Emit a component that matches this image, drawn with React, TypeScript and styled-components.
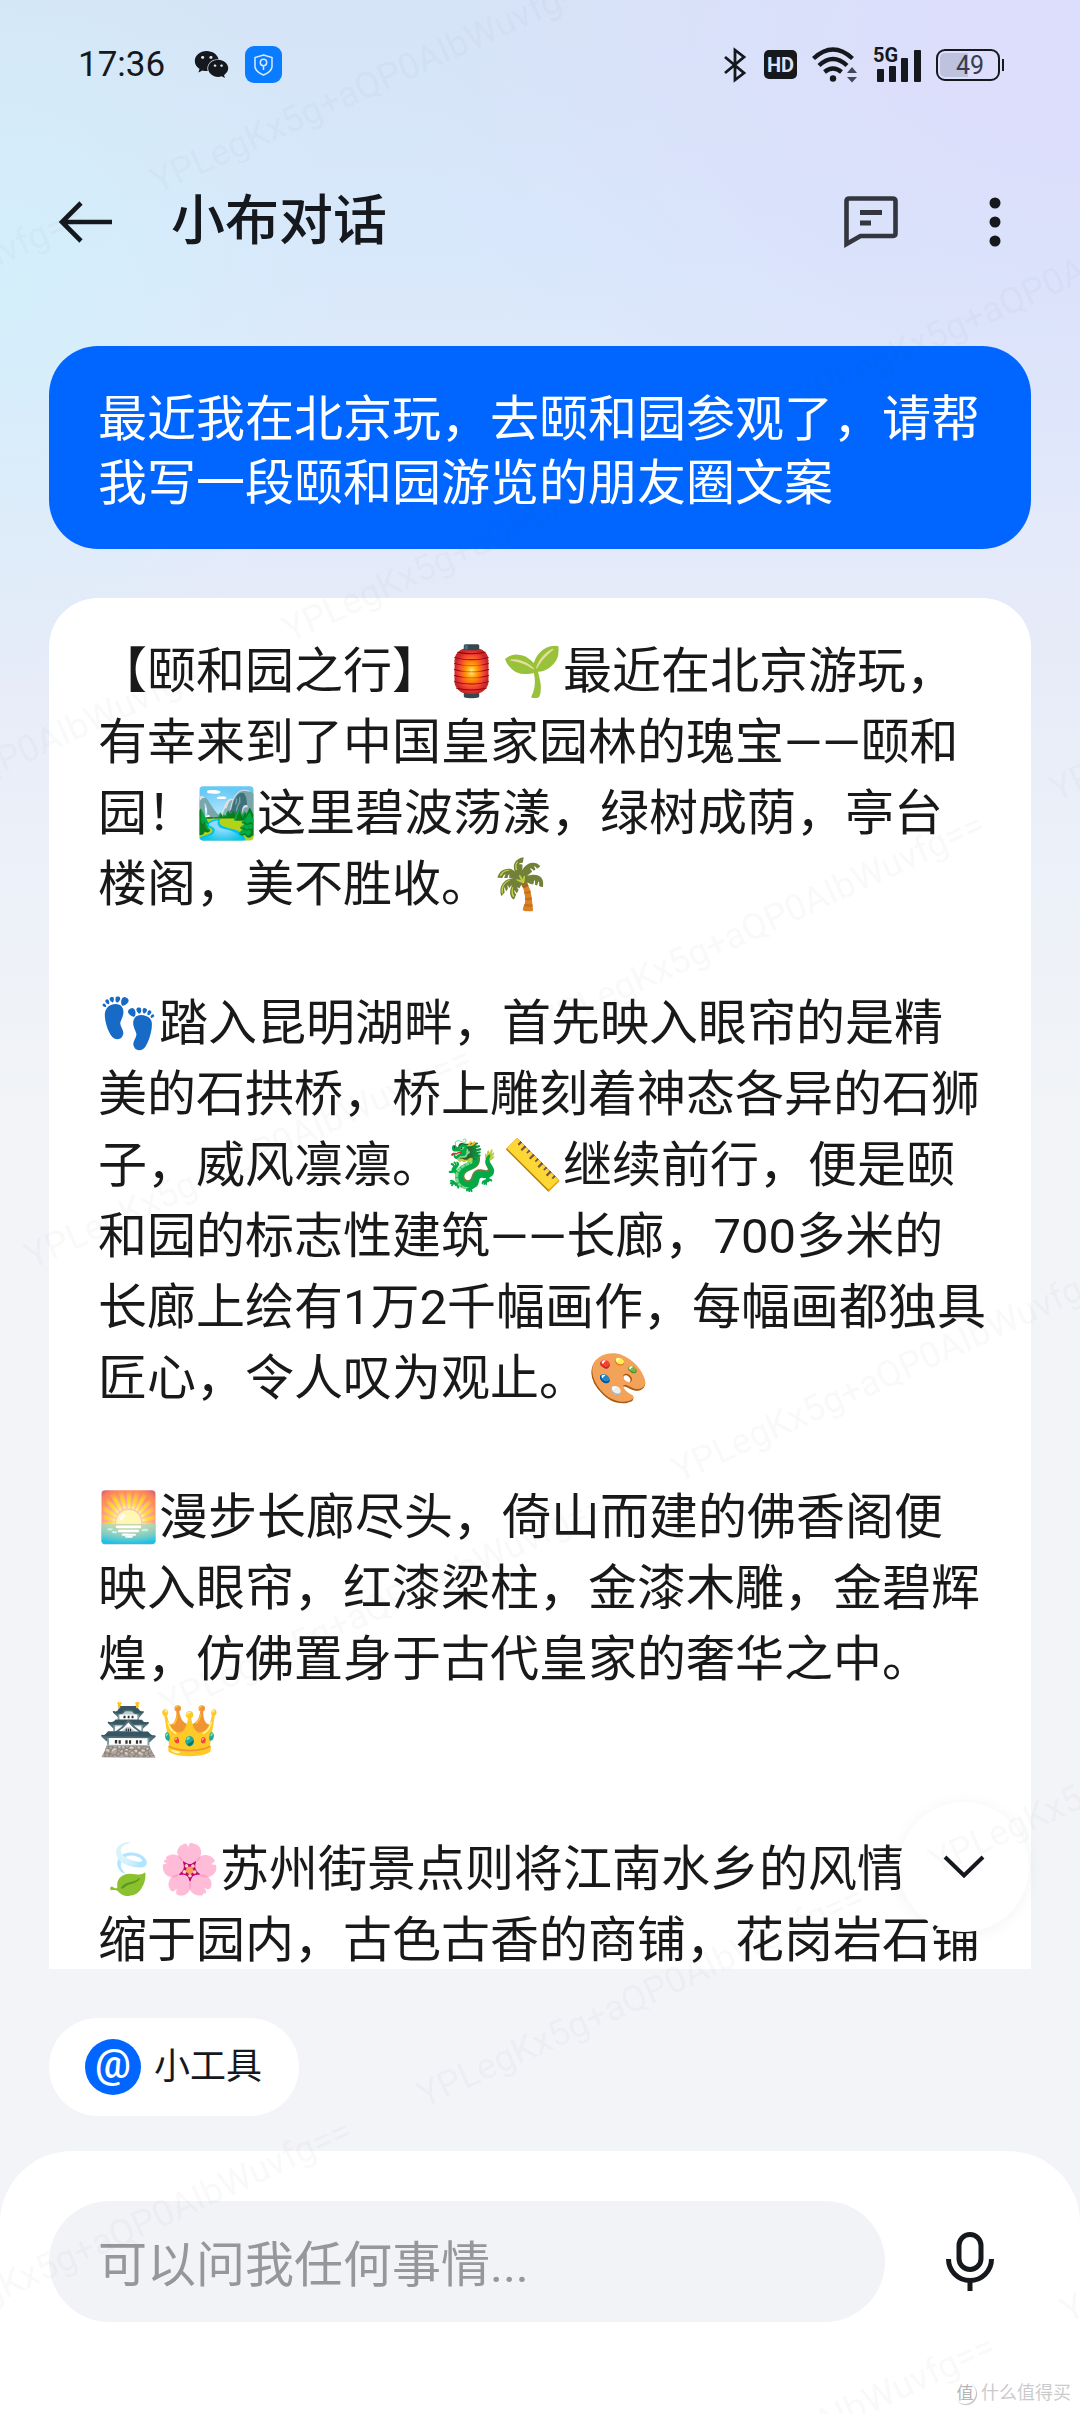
import React from "react";
import styled, { createGlobalStyle } from "styled-components";
import { FaWeixin } from "react-icons/fa";

const INK = "#15181c";
const BLUE = "#0066ff";
const SANS = `Roboto, "Noto Sans CJK SC", "Noto Color Emoji", sans-serif`;

const GlobalStyle = createGlobalStyle`
  * { box-sizing: border-box; }
  body { margin: 0; background: #f3f4f7; }
  button, input { font: inherit; color: inherit; border: 0; background: none; padding: 0; margin: 0; }
`;

const Screen = styled.div`
  position: relative;
  display: flex;
  flex-direction: column;
  height: 100vh;
  overflow: hidden;
  font-family: ${SANS};
  color: ${INK};
  background:
    radial-gradient(ellipse 340px 420px at 0 290px, rgba(210, 241, 250, 0.75), rgba(210, 241, 250, 0) 100%),
    radial-gradient(ellipse 680px 480px at 100% 40px, rgba(220, 222, 251, 1) 20%, rgba(222, 225, 251, 0) 100%),
    linear-gradient(180deg, #d5e4f6 0, #d8e8fb 240px, #e2e9fa 480px, #e7ebf8 640px, #edf1f8 900px, #f3f4f7 1180px);
`;

const StatusBar = styled.header`
  display: flex;
  align-items: center;
  justify-content: space-between;
  height: 129px;
  padding: 0 76px 0 78px;
`;

const StatusGroup = styled.div<{ $gap: number }>`
  display: flex;
  align-items: center;
  gap: ${(p) => p.$gap}px;
`;

const Clock = styled.time`
  font-size: 35px;
  line-height: 40px;
  margin-right: 13px;
`;

const ShieldBadge = styled.span`
  display: grid;
  place-items: center;
  width: 37px;
  height: 37px;
  border-radius: 9px;
  background: #0a7cff;
`;

const HdBadge = styled.span`
  display: grid;
  place-items: center;
  width: 33px;
  height: 29px;
  border-radius: 5px;
  background: ${INK};
  color: #dee0fb;
  font-size: 20px;
  line-height: 30px;
  font-weight: 700;
`;

const Signal = styled.span`
  display: grid;
  width: 48px;
  height: 36px;
  & > * { grid-area: 1 / 1; }
`;

const Network = styled.span`
  font-size: 20px;
  line-height: 17px;
  font-weight: 700;
`;

const Battery = styled.span`
  display: flex;
  align-items: center;
  gap: 2px;
  &::after {
    content: "";
    width: 2px;
    height: 12px;
    background: ${INK};
  }
`;

const BatteryBody = styled.span`
  width: 64px;
  height: 32px;
  border: 2px solid ${INK};
  border-radius: 9px;
  padding: 2px;
`;

const BatteryFill = styled.span`
  display: block;
  height: 24px;
  border-radius: 5px;
  background: linear-gradient(90deg, #bfc2dc 50%, transparent 50%);
  font-size: 25px;
  line-height: 25px;
  text-align: center;
  color: #3a3d4c;
  padding-left: 4px;
`;

const TitleBar = styled.nav`
  display: flex;
  align-items: center;
  height: 186px;
  padding: 0 76px 0 58px;
`;

const Title = styled.h1`
  flex: 1;
  margin: 0 0 0 58px;
  font-size: 54px;
  line-height: 72px;
  font-weight: 500;
`;

const IconButton = styled.button`
  display: grid;
  place-items: center;
  cursor: pointer;
  svg { display: block; }
`;

const TitleActions = styled.div`
  display: flex;
  align-items: center;
  gap: 86px;
`;

const Chat = styled.main`
  position: relative;
  flex: 1;
  min-height: 0;
  display: flex;
  flex-direction: column;
  gap: 49px;
  margin: 31px 49px 0;
`;

const Question = styled.p`
  flex: none;
  margin: 0;
  padding: 42px 49px 33px;
  border-radius: 49px;
  background: ${BLUE};
  color: #fff;
  font-size: 49px;
  line-height: 64px;
  white-space: pre-line;
`;

const Answer = styled.article`
  flex: 1;
  min-height: 0;
  overflow: hidden;
  display: flex;
  flex-direction: column;
  gap: 68px;
  padding: 38px 40px 0 49px;
  border-radius: 49px 49px 0 0;
  background: #fff;
  color: #191919;
`;

const Paragraph = styled.p`
  margin: 0;
  font-size: 49px;
  line-height: 71px;
  white-space: pre-line;
`;

const ScrollDown = styled(IconButton)`
  position: absolute;
  right: 2px;
  bottom: 37px;
  width: 130px;
  height: 130px;
  border-radius: 50%;
  background: #fff;
  box-shadow: 0 2px 16px rgba(30, 40, 70, 0.05);
`;

const Tools = styled.div`
  display: flex;
  padding: 49px 49px 35px;
`;

const ToolChip = styled.button`
  display: flex;
  align-items: center;
  gap: 13px;
  height: 98px;
  padding: 0 37px 0 36px;
  border-radius: 49px;
  background: #fff;
  font-size: 36px;
  line-height: 48px;
  cursor: pointer;
`;

const AtBadge = styled.span`
  display: grid;
  place-items: center;
  width: 56px;
  height: 56px;
  border-radius: 50%;
  background: ${BLUE};
  color: #fff;
  font-size: 40px;
  font-weight: 500;
  line-height: 50px;
  padding-bottom: 4px;
`;

const Composer = styled.form`
  display: flex;
  align-items: center;
  gap: 60px;
  padding: 50px 85px 92px 49px;
  border-radius: 72px 72px 0 0;
  background: #fff;
`;

const PromptInput = styled.input`
  flex: 1;
  min-width: 0;
  height: 121px;
  padding: 8px 49px 0;
  border-radius: 61px;
  background: #f2f3f6;
  font-size: 49px;
  outline: none;
  &::placeholder { color: #969799; opacity: 1; }
`;

const WatermarkLayer = styled.div`
  position: absolute;
  inset: 0;
  overflow: hidden;
  pointer-events: none;
`;

const WatermarkBoard = styled.div`
  display: flex;
  flex-direction: column;
  width: max-content;
  transform-origin: 0 0;
  transform: rotate(-24.5deg) translate(-1127px, 212px);
`;

const WatermarkRow = styled.div<{ $start: number }>`
  display: flex;
  height: 463px;
  padding-left: ${(p) => p.$start}px;
  font-size: 36px;
  line-height: 36px;
  color: rgba(70, 80, 120, 0.055);
  & > span { width: 563px; }
`;

const SourceTag = styled.footer`
  position: absolute;
  right: 9px;
  bottom: 8px;
  display: flex;
  align-items: center;
  gap: 5px;
  font-size: 18px;
  line-height: 26px;
  color: #cbcbcd;
`;

const SourceLogo = styled.span`
  display: grid;
  place-items: center;
  width: 22px;
  height: 22px;
  border-radius: 50%;
  box-shadow: 1px 1px 1px #bcbcbe;
  color: #b4b4b6;
  font-size: 17px;
  line-height: 22px;
`;

const answer = [
  "【颐和园之行】🏮🌱最近在北京游玩，\n有幸来到了中国皇家园林的瑰宝——颐和\n园！🏞️这里碧波荡漾，绿树成荫，亭台\n楼阁，美不胜收。🌴",
  "👣踏入昆明湖畔，首先映入眼帘的是精\n美的石拱桥，桥上雕刻着神态各异的石狮\n子，威风凛凛。🐉📏继续前行，便是颐\n和园的标志性建筑——长廊，700多米的\n长廊上绘有1万2千幅画作，每幅画都独具\n匠心，令人叹为观止。🎨",
  "🌅漫步长廊尽头，倚山而建的佛香阁便\n映入眼帘，红漆梁柱，金漆木雕，金碧辉\n煌，仿佛置身于古代皇家的奢华之中。\n🏯👑",
  "🍃🌸苏州街景点则将江南水乡的风情\n缩于园内，古色古香的商铺，花岗岩石铺",
];

const watermarkRows = [
  { start: 627, marks: 2 },
  { start: 561, marks: 3 },
  { start: 630, marks: 3 },
  { start: 567, marks: 2 },
  { start: 76, marks: 3 },
  { start: 572, marks: 2 },
];

export default function App() {
  return (
    <Screen>
      <GlobalStyle />
      <StatusBar>
        <StatusGroup $gap={16}>
          <Clock>17:36</Clock>
          <FaWeixin size={35} />
          <ShieldBadge>
            <svg width="19" height="22" viewBox="0 0 19 22" fill="none" stroke="#d8eaff" strokeWidth="1.500">
              <path d="M9.500 1 L18 3.500 V13 Q17 18 9.500 21 Q2 18 1 13 V3.500 Z" />
              <circle cx="9.500" cy="8.500" r="3.200" />
              <path d="M9.500 11.700 V16" />
            </svg>
          </ShieldBadge>
        </StatusGroup>
        <StatusGroup $gap={15}>
          <svg width="26" height="36" viewBox="0 0 26 36" fill="none" stroke={INK} strokeWidth="2.800">
            <path d="M2 10 L21 26 L12 33 V3 L21 10 L2 26" />
          </svg>
          <HdBadge>HD</HdBadge>
          <svg width="46" height="36" viewBox="0 0 46 36" fill="none" stroke={INK} strokeWidth="4.400">
            <path d="M1.500 11.500 Q21 -6.500 40.500 11.500" />
            <path d="M7 18.500 Q21 5.500 35 18.500" />
            <path d="M12.500 25 Q21 18 29.500 25" />
            <circle cx="21" cy="31.500" r="3.200" fill={INK} stroke="none" />
            <path d="M35 26 L40 20 L45 26 Z M35 30 L40 35.500 L45 30 Z" fill="#444757" stroke="none" />
          </svg>
          <Signal>
            <Network>5G</Network>
            <svg width="48" height="36" viewBox="0 0 48 36" fill={INK}>
              <rect x="4" y="22" width="7" height="13" rx="1" />
              <rect x="16" y="19" width="7" height="16" rx="1" />
              <rect x="28" y="11" width="7" height="24" rx="1" />
              <rect x="41" y="3" width="7" height="32" rx="1" />
            </svg>
          </Signal>
          <Battery>
            <BatteryBody>
              <BatteryFill>49</BatteryFill>
            </BatteryBody>
          </Battery>
        </StatusGroup>
      </StatusBar>

      <TitleBar>
        <IconButton type="button" aria-label="返回">
          <svg width="55" height="44" viewBox="0 0 55 44" fill="none" stroke={INK} strokeWidth="4.600">
            <path d="M54 22 H4 M23 3 L4 22 L23 41" />
          </svg>
        </IconButton>
        <Title>小布对话</Title>
        <TitleActions>
          <IconButton type="button" aria-label="消息">
            <svg width="54" height="52" viewBox="0 0 54 52" fill="none" stroke="#33363e" strokeWidth="4.600">
              <path d="M2.500 48 V5 Q2.500 2.500 5.500 2.500 H48.500 Q51.500 2.500 51.500 5 V37.500 Q51.500 40 48.500 40 H16.500 Z" />
              <path d="M16 16.500 H38 M16 27 H27" strokeWidth="5" />
            </svg>
          </IconButton>
          <IconButton type="button" aria-label="更多">
            <svg width="20" height="54" viewBox="0 0 20 54" fill={INK}>
              <circle cx="11" cy="8" r="5.500" />
              <circle cx="11" cy="27" r="5.500" />
              <circle cx="11" cy="46" r="5.500" />
            </svg>
          </IconButton>
        </TitleActions>
      </TitleBar>

      <Chat>
        <Question>{"最近我在北京玩，去颐和园参观了，请帮\n我写一段颐和园游览的朋友圈文案"}</Question>
        <Answer>
          {answer.map((text) => (
            <Paragraph key={text}>{text}</Paragraph>
          ))}
        </Answer>
        <ScrollDown type="button" aria-label="滚动到底部">
          <svg width="42" height="24" viewBox="0 0 42 24" fill="none" stroke={INK} strokeWidth="4">
            <path d="M2 2 L21 20.500 L40 2" />
          </svg>
        </ScrollDown>
      </Chat>

      <Tools>
        <ToolChip type="button">
          <AtBadge>@</AtBadge>
          小工具
        </ToolChip>
      </Tools>

      <Composer onSubmit={(e) => e.preventDefault()}>
        <PromptInput type="text" aria-label="提问" placeholder="可以问我任何事情..." />
        <IconButton type="button" aria-label="语音输入">
          <svg width="50" height="60" viewBox="0 0 50 60" fill="none" stroke={INK} strokeWidth="5">
            <rect x="14" y="2.500" width="22" height="35" rx="11" />
            <path d="M3.500 27 A21.500 21.500 0 0 0 46.500 27 M25 48 V59" />
          </svg>
        </IconButton>
      </Composer>

      <WatermarkLayer aria-hidden="true">
        <WatermarkBoard>
          {watermarkRows.map(({ start, marks }) => (
            <WatermarkRow key={start} $start={start}>
              {Array.from({ length: marks }, (_, n) => (
                <span key={n}>YPLegKx5g+aQP0AIbWuvfg==</span>
              ))}
            </WatermarkRow>
          ))}
        </WatermarkBoard>
      </WatermarkLayer>
      <SourceTag>
        <SourceLogo>值</SourceLogo>
        什么值得买
      </SourceTag>
    </Screen>
  );
}
